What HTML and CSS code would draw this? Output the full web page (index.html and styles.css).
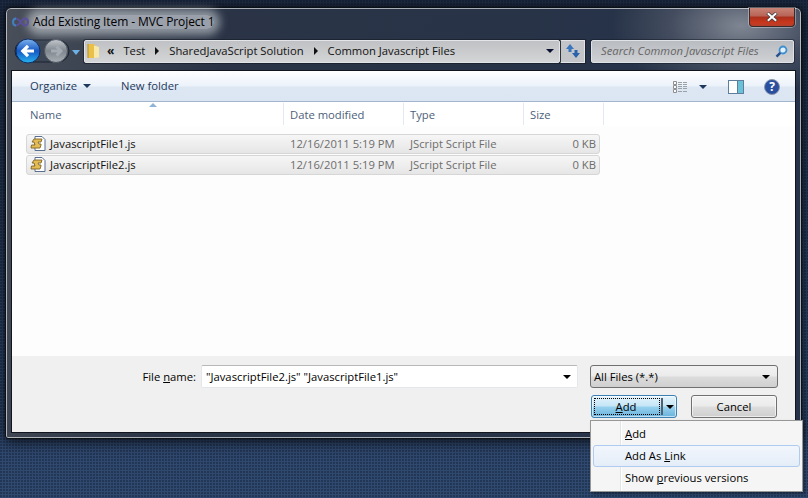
FILE: index.html
```html
<!DOCTYPE html>
<html lang="en">
<head>
<meta charset="utf-8">
<title>Add Existing Item</title>
<link rel="stylesheet" href="styles.css">
</head>
<body>
<div class="window">
  <div class="titlebar">
    <svg class="app-icon" width="17" height="10" viewBox="0 0 17 10"><path d="M8.500 5C6.800 2.600 5.600 1.400 4 1.400 2.300 1.400 1 3 1 5s1.300 3.600 3 3.600c1.600 0 2.800-1.200 4.500-3.600zm0 0c1.700-2.400 2.900-3.600 4.500-3.600 1.700 0 3 1.600 3 3.600s-1.300 3.600-3 3.600c-1.600 0-2.800-1.200-4.500-3.600z" fill="none" stroke="#5a4f9a" stroke-width="2"/><path d="M1 5c0-2 1.300-3.600 3-3.600M1 5c0 2 1.300 3.600 3 3.600" fill="none" stroke="#3f82b8" stroke-width="2"/></svg>
    <span class="title-glow">Add Existing Item - MVC Project 1</span>
    <div class="close">
      <svg width="12" height="10" viewBox="0 0 12 10"><path d="M1.500 1l9 8M10.500 1l-9 8" stroke="#3a3a3a" stroke-width="3.400"/><path d="M1.800 1.200l8.400 7.600M10.200 1.200L1.800 8.800" stroke="#fff" stroke-width="2"/></svg>
    </div>
  </div>
  <div class="navrow">
    <div class="navgroup">
      <svg width="56" height="28" viewBox="0 0 56 28">
        <defs>
          <linearGradient id="bluebtn" x1="0" y1="0" x2="0" y2="1"><stop offset="0" stop-color="#7fb4ee"/><stop offset=".5" stop-color="#1458c4"/><stop offset="1" stop-color="#29b4ee"/></linearGradient>
          <linearGradient id="graybtn" x1="0" y1="0" x2="0" y2="1"><stop offset="0" stop-color="#c3c8ce"/><stop offset=".5" stop-color="#7f868d"/><stop offset="1" stop-color="#a9b0b6"/></linearGradient>
        </defs>
        <rect x="1" y="3" width="54" height="22" rx="11" fill="#3c4655" stroke="#1a2230"/>
        <circle cx="42" cy="14" r="11.500" fill="url(#graybtn)" stroke="#4d5560"/>
        <path d="M37 14h9M42.500 9.500l4.500 4.500-4.500 4.500" fill="none" stroke="#a4abb2" stroke-width="3"/>
        <circle cx="14" cy="14" r="12" fill="url(#bluebtn)" stroke="#0f2f68"/>
        <path d="M20 14H10M14 8.800L8.800 14l5.200 5.200" fill="none" stroke="#fff" stroke-width="3.200"/>
      </svg>
      <svg class="nav-drop" width="8" height="5" viewBox="0 0 8 5"><path d="M0 0h8L4 5z" fill="#6eb0e6"/></svg>
    </div>
    <div class="address">
      <svg class="folder" width="13" height="16" viewBox="0 0 13 16"><path d="M1 1h6l1 1v13H1z" fill="#e8c04a"/><path d="M7 2.500l5 1.500v10.500l-5 .5z" fill="#f8e9a8"/><path d="M1 1v14" stroke="#b98f24"/></svg>
      <span class="crumb chev">«</span>
      <span class="crumb">Test</span>
      <span class="arrow"></span>
      <span class="crumb">SharedJavaScript Solution</span>
      <span class="arrow"></span>
      <span class="crumb">Common Javascript Files</span>
      <span class="addr-drop"></span>
    </div>
    <div class="refresh">
      <svg width="16" height="14" viewBox="0 0 16 14"><path d="M5 0L1 5h2.500v3h3V5H9z" fill="#3a76bd"/><path d="M11 14l4-5h-2.500V6h-3v3H7z" fill="#2a62ac"/></svg>
    </div>
    <div class="search">
      <span class="search-text">Search Common Javascript Files</span>
      <svg width="13" height="13" viewBox="0 0 13 13"><circle cx="8" cy="5" r="3.500" fill="#e3f0fa" stroke="#3f8fd0" stroke-width="1.800"/><path d="M5.300 7.800L1.500 11.600" stroke="#24508f" stroke-width="2.400"/></svg>
    </div>
  </div>
  <div class="panel">
    <div class="toolbar">
      <span class="tool">Organize<i class="tool-drop"></i></span>
      <span class="tool">New folder</span>
      <div class="tool-right">
        <svg class="view" width="15" height="12" viewBox="0 0 15 12"><path d="M.5.500h3v3h-3zM.5 4.500h3v3h-3zM.5 8.500h3v3h-3z" fill="#fff" stroke="#8e8e8e"/><path d="M2 2h.1M2 6h.1M2 10h.1" stroke="#c53030" stroke-width="1"/><path d="M5 1.500h4M10 1.500h4M5 3.500h4M10 3.500h4M5 5.500h4M10 5.500h4M5 7.500h4M10 7.500h4M5 10.500h4M10 10.500h4" stroke="#9aa0a8"/></svg>
        <i class="view-drop"></i>
        <svg class="pane" width="16" height="14" viewBox="0 0 16 14"><rect x=".5" y=".5" width="15" height="13" fill="#fff" stroke="#5d7f9c"/><rect x="10" y="1" width="5" height="12" fill="#6bc2d8"/><path d="M9.500 1v12" stroke="#5d7f9c"/></svg>
        <svg class="help" width="16" height="16" viewBox="0 0 16 16"><circle cx="8" cy="8" r="7.500" fill="#2b4f9f" stroke="#8a98ad"/><text x="8" y="12" text-anchor="middle" class="help-q">?</text></svg>
      </div>
    </div>
    <div class="header">
      <i class="sort"></i>
      <span class="col col-name">Name</span>
      <span class="col col-date">Date modified</span>
      <span class="col col-type">Type</span>
      <span class="col col-size">Size</span>
    </div>
    <div class="list">
      <div class="row">
        <span class="cell-name">
          <svg width="16" height="16" viewBox="0 0 16 16"><path d="M5 .5h7l3 3v11H5z" fill="#fff" stroke="#5a6f90"/><path d="M4 3h8l-1 3H8l1 2h2v1l-1 3H1l.5-3H5L4 6H2z" fill="#e3bc55" stroke="#7f6426" stroke-width=".9"/></svg>
          JavascriptFile1.js
        </span>
        <span class="cell-date">12/16/2011 5:19 PM</span>
        <span class="cell-type">JScript Script File</span>
        <span class="cell-size">0 KB</span>
      </div>
      <div class="row">
        <span class="cell-name">
          <svg width="16" height="16" viewBox="0 0 16 16"><path d="M5 .5h7l3 3v11H5z" fill="#fff" stroke="#5a6f90"/><path d="M4 3h8l-1 3H8l1 2h2v1l-1 3H1l.5-3H5L4 6H2z" fill="#e3bc55" stroke="#7f6426" stroke-width=".9"/></svg>
          JavascriptFile2.js
        </span>
        <span class="cell-date">12/16/2011 5:19 PM</span>
        <span class="cell-type">JScript Script File</span>
        <span class="cell-size">0 KB</span>
      </div>
    </div>
    <div class="footer">
      <div class="name-row">
        <label class="name-label">File <u>n</u>ame:</label>
        <div class="name-input">"JavascriptFile2.js" "JavascriptFile1.js"<i class="drop"></i></div>
        <div class="filter">All Files (*.*)<i class="drop"></i></div>
      </div>
      <div class="button-row">
        <div class="add-btn"><span class="add-main"><u>A</u>dd</span><span class="add-split"><i class="drop"></i></span></div>
        <div class="cancel-btn">Cancel</div>
      </div>
    </div>
  </div>
</div>
<div class="menu">
  <div class="item"><u>A</u>dd</div>
  <div class="item active">Add As <u>L</u>ink</div>
  <div class="item">Show <u>p</u>revious versions</div>
</div>
</body>
</html>
```
FILE: styles.css
```css
* { box-sizing: border-box; }
html, body { margin: 0; height: 100%; }
body {
  position: relative;
  width: 808px;
  height: 498px;
  overflow: hidden;
  font-family: "Open Sans", "Noto Sans", sans-serif;
  font-size: 11.25px;
  color: #000;
  background-color: #2f4a70;
  background-image:
    radial-gradient(circle at 1px 1px, rgba(10,20,40,.35) .8px, transparent 1.100px),
    linear-gradient(#1d2a40 0, #24344f 20%, #2d4569 70%, #30496f 100%);
  background-size: 3px 3px, 100% 100%;
}
i { display: block; }
u { text-underline-offset: 1px; }
.window {
  position: absolute;
  left: 5px;
  top: 7px;
  width: 797px;
  height: 432px;
  display: flex;
  flex-direction: column;
  border-radius: 6px 6px 3px 3px;
  border: 1px solid #0b0f16;
  box-shadow: inset 0 0 0 1px rgba(255,255,255,.6), 0 4px 14px rgba(0,0,0,.55), 0 0 6px rgba(0,0,0,.5);
  background:
    radial-gradient(ellipse 130px 70px at 735px 18px, rgba(150,155,165,.8), rgba(120,125,135,.35) 55%, transparent 100%),
    linear-gradient(100deg, #4a505a 0, #3a4250 12%, #2a3446 26%, #25324a 100%);
}
.titlebar {
  height: 31px;
  flex: none;
  display: flex;
  align-items: center;
  padding: 0 6px 4px 6px;
  position: relative;
}
.app-icon { margin-right: 4px; flex: none; position: relative; z-index: 1; }
.title-glow {
  font-size: 12px;
  color: #000;
  background: rgba(220,225,230,.62);
  box-shadow: 0 0 9px 6px rgba(220,225,230,.55);
  border-radius: 8px;
  line-height: 14px;
  letter-spacing: -.1px;
}
.close {
  position: absolute;
  right: 6px;
  top: 0;
  width: 46px;
  height: 19px;
  border: 1px solid #3c2a2a;
  border-top: 0;
  border-radius: 0 0 4px 4px;
  box-shadow: 0 0 0 1px rgba(255,255,255,.35);
  background: linear-gradient(#c88578 0, #b76355 45%, #a92f1c 50%, #c9371c 80%, #b4402c 100%);
  display: flex;
  align-items: center;
  justify-content: center;
}
.navrow {
  height: 31px;
  flex: none;
  display: flex;
  align-items: center;
  padding: 0 6px 7px 8px;
}
.navgroup { display: flex; align-items: center; width: 70px; flex: none; }
.nav-drop { margin-left: 2px; margin-top: 3px; }
.address {
  flex: none;
  width: 476px;
  height: 23px;
  display: flex;
  align-items: center;
  padding: 0 0 2px 2px;
  background: linear-gradient(#bfc1c4, #d4d5d6);
  border: 1px solid #e2e4e7;
  box-shadow: 0 0 0 1px rgba(20,25,35,.6);
  border-radius: 2px;
  color: #111;
  position: relative;
}
.folder { margin-right: 7px; flex: none; margin-top: 2px; }
.crumb { white-space: nowrap; }
.chev { font-weight: 700; margin-right: 9px; font-size: 12px; }
.arrow {
  width: 0; height: 0;
  margin: 2px 10px 0;
  border-left: 4px solid #111;
  border-top: 4px solid transparent;
  border-bottom: 4px solid transparent;
}
.addr-drop {
  position: absolute;
  right: 5px;
  top: 8px;
  border-top: 4px solid #0a1030;
  border-left: 4px solid transparent;
  border-right: 4px solid transparent;
}
.refresh {
  flex: none;
  width: 25px;
  height: 23px;
  background: #c3c5c8;
  border: 1px solid #e2e4e7;
  border-left: 1px solid #555;
  box-shadow: 0 0 0 1px rgba(20,25,35,.6);
  display: flex;
  align-items: center;
  justify-content: center;
}
.search {
  flex: none;
  width: 203px;
  height: 23px;
  margin-left: 6px;
  display: flex;
  align-items: center;
  justify-content: space-between;
  padding: 0 5px 0 9px;
  background: linear-gradient(#b9bcc1, #cfd1d4);
  border: 1px solid #dfe2e6;
  box-shadow: 0 0 0 1px rgba(20,25,35,.5);
  border-radius: 2px;
}
.search-text { color: #666; font-style: italic; white-space: nowrap; padding-bottom: 2px; }
.panel {
  margin-left: 5px;
  width: 785px;
  height: 363px;
  display: flex;
  flex-direction: column;
  border: 1px solid #10151e;
  background: #fff;
}
.toolbar {
  height: 31px;
  flex: none;
  display: flex;
  align-items: center;
  padding: 0 15px 0 18px;
  gap: 30px;
  background: linear-gradient(#fdfeff 0, #ecf2fa 48%, #dde7f3 52%, #dce6f3 100%);
  border-bottom: 1px solid #a3b5cd;
  border-top: 1px solid #fff;
  color: #1e395b;
}
.tool { display: flex; align-items: center; white-space: nowrap; padding-bottom: 2px; }
.tool-drop, .view-drop {
  margin-left: 6px;
  border-top: 4px solid #1e395b;
  border-left: 4px solid transparent;
  border-right: 4px solid transparent;
}
.tool-right { margin-left: auto; display: flex; align-items: center; }
.view-drop { margin: 0 21px 0 11px; }
.pane { margin-right: 20px; }
.help-q { font: 700 12px "Open Sans", sans-serif; fill: #fff; }
.header {
  height: 24px;
  flex: none;
  display: flex;
  position: relative;
  color: #4c607a;
}
.sort {
  position: absolute;
  left: 137px;
  top: 1px;
  border-bottom: 4px solid #8fb3d6;
  border-left: 4px solid transparent;
  border-right: 4px solid transparent;
}
.col {
  display: flex;
  align-items: center;
  padding-left: 6px;
  border-right: 1px solid #e3e9f1;
  height: 22px;
  margin-top: 1px;
}
.col-name { width: 272px; padding-left: 18px; }
.col-date, .col-type { width: 120px; }
.col-size { width: 80px; }
.list {
  flex: 1;
  background: #fdfdfd;
  padding: 8px 0 0 14px;
  display: flex;
  flex-direction: column;
  gap: 1px;
}
.row {
  width: 574px;
  height: 20px;
  padding-bottom: 2px;
  display: grid;
  grid-template-columns: 263px 120px 120px 66px;
  align-items: center;
  border: 1px solid #d6d6d6;
  border-radius: 3px;
  background: linear-gradient(#f6f6f6, #e6e6e6);
  color: #6d6d6d;
}
.cell-name { display: flex; align-items: center; gap: 4px; padding-left: 3px; color: #111; }
.cell-name svg { margin-top: 1px; }
.cell-size { text-align: right; }
.footer {
  height: 76px;
  flex: none;
  background: #f0f0f0;
  padding: 9px 17px 0 0;
  display: flex;
  flex-direction: column;
  gap: 7px;
}
.name-row { display: flex; align-items: center; }
.name-label { margin-left: auto; margin-right: 5px; white-space: nowrap; }
.name-input {
  width: 377px;
  height: 23px;
  display: flex;
  align-items: center;
  justify-content: space-between;
  padding: 0 6px 0 4px;
  background: #fff;
  border: 1px solid #e3e7ec;
  border-top-color: #b8b8b8;
  border-radius: 2px;
  white-space: nowrap;
}
.drop {
  border-top: 4px solid #000;
  border-left: 4px solid transparent;
  border-right: 4px solid transparent;
}
.filter {
  width: 188px;
  height: 23px;
  margin-left: 12px;
  display: flex;
  align-items: center;
  justify-content: space-between;
  padding: 0 7px 0 3px;
  border: 1px solid #707070;
  border-radius: 3px;
  background: linear-gradient(#f2f2f2 0, #ebebeb 48%, #dcdcdc 52%, #cfcfcf 100%);
}
.button-row { display: flex; justify-content: flex-end; gap: 14px; padding-right: 1px; }
.add-btn {
  width: 86px;
  height: 23px;
  display: flex;
  border: 1px solid #3c7fb1;
  border-radius: 3px;
  background: linear-gradient(#e5f4fc 0, #c4e5f6 48%, #98d1ef 52%, #68b3db 100%);
  box-shadow: inset 0 0 0 1px rgba(255,255,255,.6);
}
.add-main {
  flex: 1;
  margin: 2px 1px 2px 2px;
  border: 1px dotted #000;
  display: flex;
  align-items: center;
  justify-content: center;
  padding: 0 2px 1px 0;
}
.add-split {
  width: 15px;
  flex: none;
  margin: 2px 0;
  border-left: 2px solid #50606e;
  display: flex;
  align-items: center;
  justify-content: center;
}
.cancel-btn {
  width: 86px;
  height: 23px;
  display: flex;
  align-items: center;
  justify-content: center;
  padding-bottom: 1px;
  border: 1px solid #707070;
  border-radius: 3px;
  background: linear-gradient(#f2f2f2 0, #ebebeb 48%, #dddddd 52%, #cfcfcf 100%);
  box-shadow: inset 0 0 0 1px rgba(255,255,255,.6);
}
.menu {
  position: absolute;
  left: 590px;
  top: 420px;
  width: 213px;
  height: 72px;
  padding: 2px 2px;
  border: 1px solid #979797;
  background: linear-gradient(90deg, #f5f5f5 0, #f5f5f5 29px, #e2e3e3 29px, #e2e3e3 30px, #fff 30px, #fff 31px, #f5f5f5 31px);
  box-shadow: 2px 2px 3px rgba(0,0,0,.35);
}
.item {
  height: 22px;
  display: flex;
  align-items: center;
  padding: 0 0 1px 31px;
  white-space: pre;
  border: 1px solid transparent;
  border-radius: 3px;
}
.item.active {
  border-color: #aeccf0;
  background: linear-gradient(#f2f6fc, #e4edf8);
}
```
